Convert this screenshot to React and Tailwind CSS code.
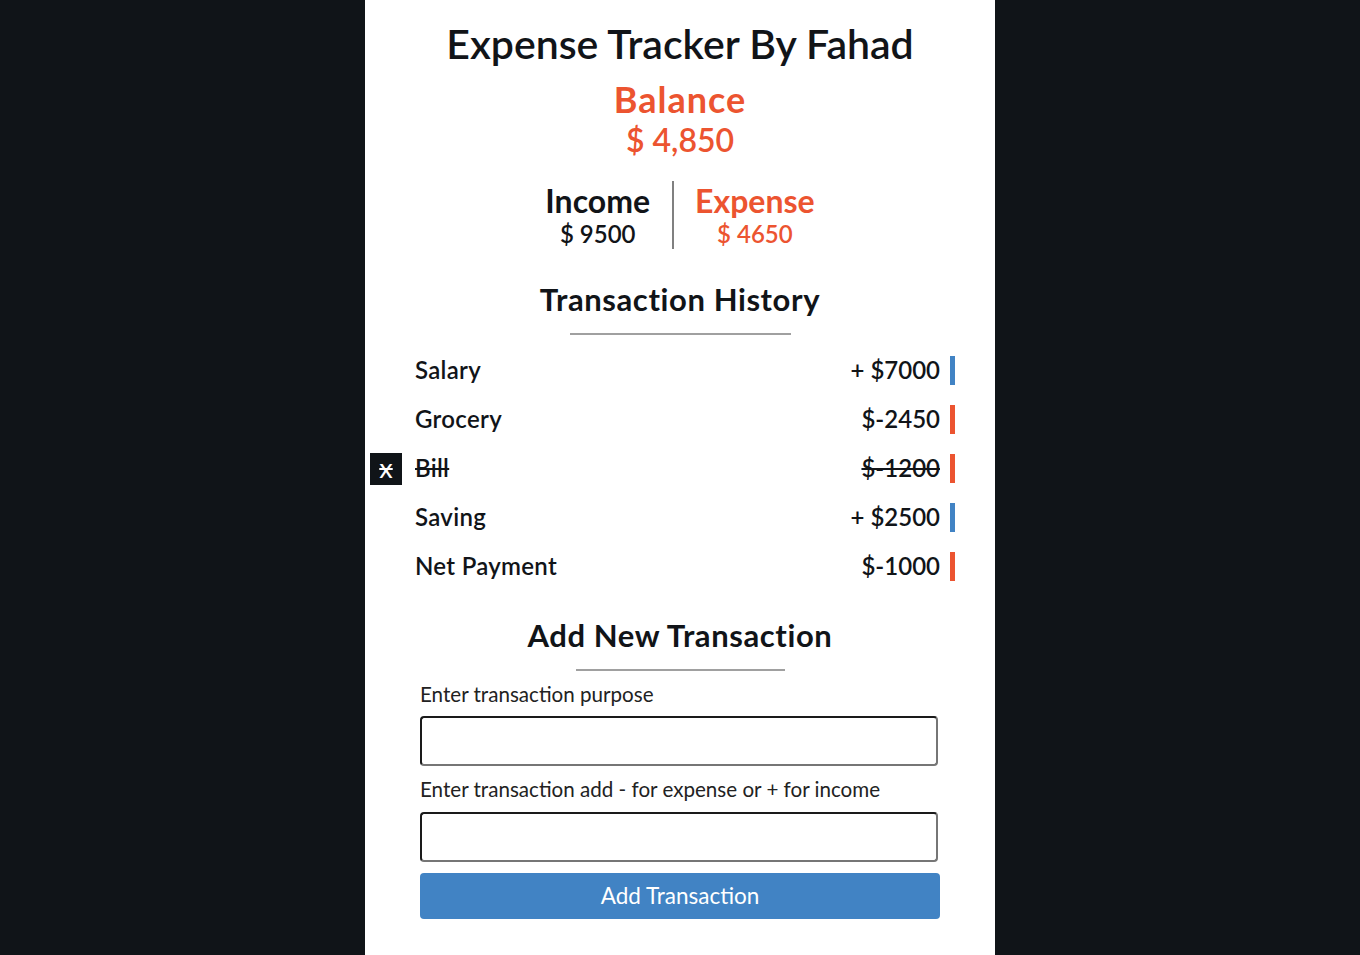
import React from "react";

const rows = [
  { name: "Salary", amount: "+ $7000", income: true },
  { name: "Grocery", amount: "$-2450", income: false },
  { name: "Bill", amount: "$-1200", income: false, done: true },
  { name: "Saving", amount: "+ $2500", income: true },
  { name: "Net Payment", amount: "$-1000", income: false },
];

export default function App() {
  return (
    <div className="min-h-screen w-full bg-[#101418]" style={{ fontFamily: "Lato, 'Open Sans', sans-serif" }}>
      <div className="mx-auto min-h-[955px] w-[630px] bg-white text-[#111418] flex flex-col">
        <h1 className="mt-[19px] text-center text-[41px] leading-[1.2] font-semibold">Expense Tracker By Fahad</h1>
        <div className="mt-[10px] text-center text-[#ec5430] text-[36px] leading-[1.2] font-bold tracking-[1px]">Balance</div>
        <div className="text-center text-[#ec5430] text-[32px] leading-[1.2] font-semibold">$ 4,850</div>

        <div className="mt-[21px] flex justify-center">
          <div className="flex flex-col items-center border-r-2 border-[#808080] pr-[22px] pb-[2px]">
            <div className="text-[32px] leading-[40px] font-bold">Income</div>
            <div className="text-[24px] leading-[1.1] font-semibold">$ 9500</div>
          </div>
          <div className="flex flex-col items-center pl-[21px]">
            <div className="text-[32px] leading-[40px] font-bold text-[#ec5430]">Expense</div>
            <div className="text-[24px] leading-[1.1] font-semibold text-[#ec5430]">$ 4650</div>
          </div>
        </div>

        <h2 className="mt-[32px] text-center text-[31px] leading-[1.2] font-bold tracking-[0.6px]">Transaction History</h2>
        <div className="mx-auto mt-[15px] h-[2px] w-[221px] bg-[#a0a0a0]" />

        <ul className="ml-[50px] mt-[21px] flex w-[540px] flex-col gap-[20px]">
          {rows.map((r) => (
            <li key={r.name} className={"relative flex h-[29px] items-center justify-between text-[24px] leading-[1.2] font-semibold" + (r.done ? " line-through" : "")}>
              {r.done && (
                <span className="absolute left-[-45px] top-[-1px] flex h-[32px] w-[32px] items-center justify-center bg-[#101418] pb-[4px] text-[27px] leading-none font-normal text-white line-through">x</span>
              )}
              <span className="tracking-[0.3px]">{r.name}</span>
              <span className="flex h-full items-center">
                <span>{r.amount}</span>
                <span className={"ml-[10px] h-full w-[5px] " + (r.income ? "bg-[#4183c4]" : "bg-[#ec5430]")} />
              </span>
            </li>
          ))}
        </ul>

        <h2 className="mt-[36px] text-center text-[31px] leading-[1.2] font-bold tracking-[0.6px]">Add New Transaction</h2>
        <div className="mx-auto mt-[14px] h-[2px] w-[209px] bg-[#a0a0a0]" />

        <div className="ml-[55px] mt-[12px] flex w-[520px] flex-col">
          <label className="text-[20.6px] leading-[1.16] text-[#222]">Enter transaction purpose</label>
          <input className="mt-[10px] h-[50px] w-[518px] rounded-[4px] border-2 border-t-[#1a1a1a] border-l-[#1a1a1a] border-b-[#767676] border-r-[#767676] outline-none" />
          <label className="mt-[12px] text-[20.6px] leading-[1.16] text-[#222]">Enter transaction add - for expense or + for income</label>
          <input className="mt-[10px] h-[50px] w-[518px] rounded-[4px] border-2 border-t-[#1a1a1a] border-l-[#1a1a1a] border-b-[#767676] border-r-[#767676] outline-none" />
          <button className="mt-[11px] h-[46px] w-[520px] rounded-[4px] bg-[#4183c4] text-[22.5px] text-white">Add Transaction</button>
        </div>
      </div>
    </div>
  );
}
